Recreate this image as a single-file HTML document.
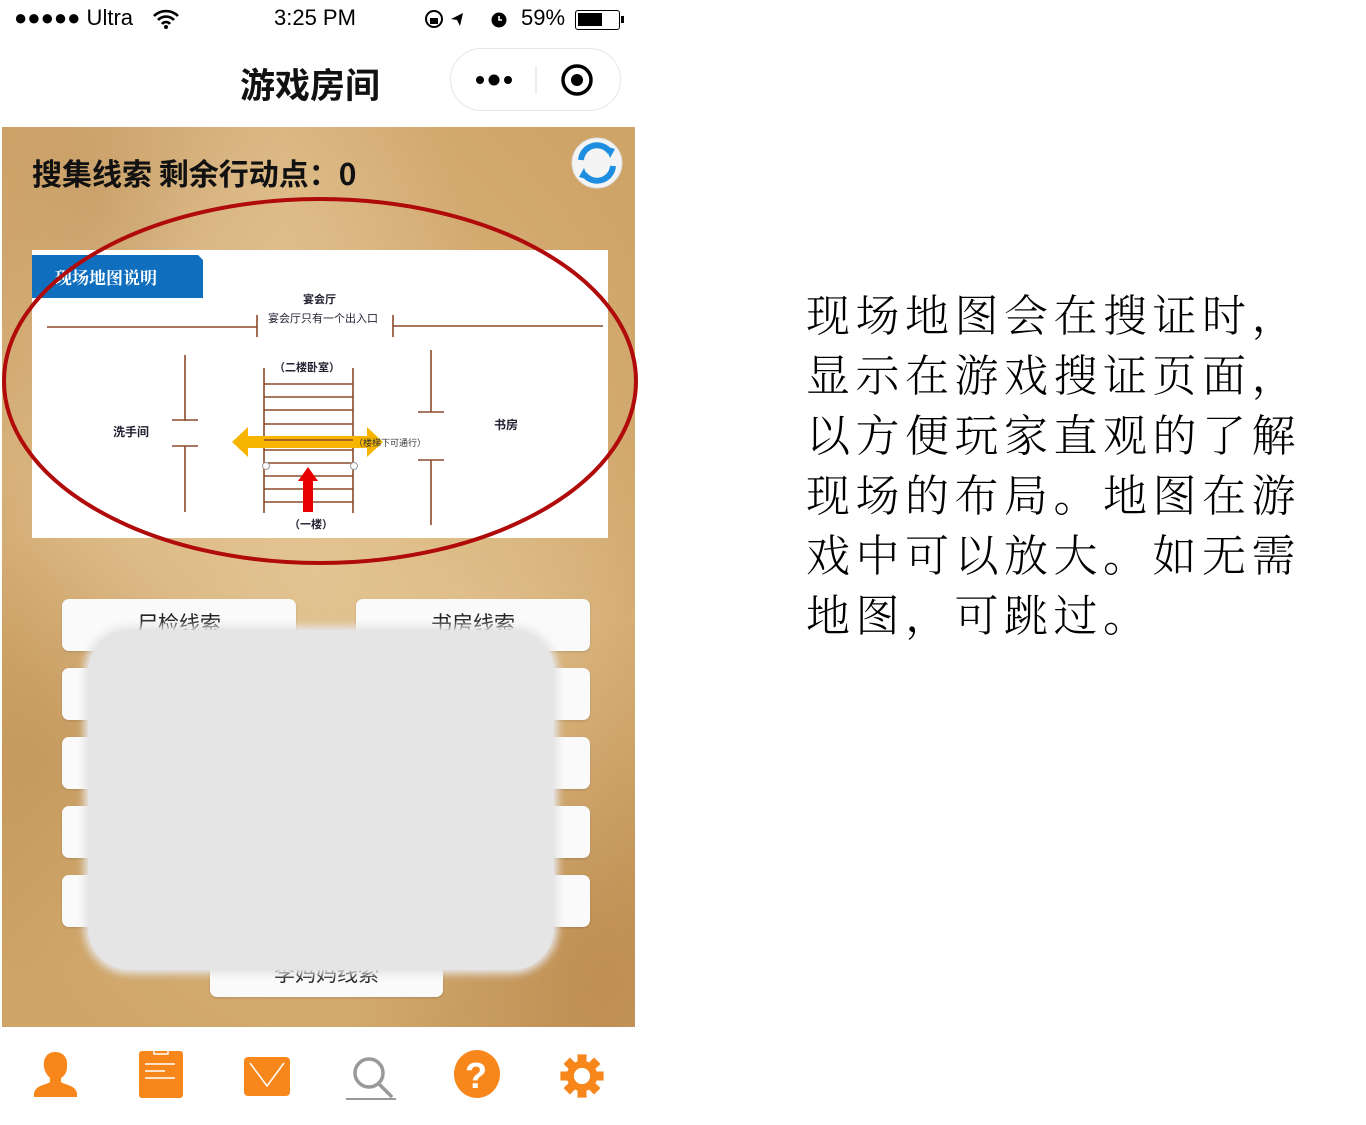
<!DOCTYPE html>
<html><head><meta charset="utf-8"><style>
*{margin:0;padding:0;box-sizing:border-box}
body{width:1366px;height:1125px;background:#fff;position:relative;overflow:hidden;font-family:"Liberation Sans","Noto Sans CJK SC",sans-serif}
.abs{position:absolute}
.parch{left:2px;top:127px;width:633px;height:900px;background:
radial-gradient(ellipse at 15% 8%,rgba(170,120,60,.35),transparent 25%),
radial-gradient(ellipse at 95% 95%,rgba(170,115,55,.45),transparent 30%),
radial-gradient(ellipse at 5% 70%,rgba(175,125,65,.35),transparent 25%),
radial-gradient(ellipse at 30% 20%,rgba(240,215,175,.6),transparent 45%),
radial-gradient(ellipse at 70% 60%,rgba(236,208,160,.5),transparent 40%),
radial-gradient(ellipse at 50% 50%,#dcbb86,#cfa468 90%);}
.btn{position:absolute;background:#fafafa;border-radius:7px;box-shadow:0 1px 2px rgba(0,0,0,.15);font-size:21px;color:#222;text-align:center;line-height:52px}
.txt{position:absolute;left:806px;font-family:"Noto Serif CJK SC","Noto Sans CJK SC",serif;font-weight:300;font-size:44px;letter-spacing:5.5px;color:#000;line-height:60px;white-space:nowrap}
</style></head><body>
<div class="abs" style="left:14px;top:5px;font-size:22px;color:#000">●●●●● Ultra</div>
<svg class="abs" style="left:152px;top:8px" width="28" height="22" viewBox="0 0 28 22"><path d="M2 8a17 17 0 0 1 24 0M6 12a11 11 0 0 1 16 0M10 16a5 5 0 0 1 8 0" stroke="#000" stroke-width="2.6" fill="none"/><circle cx="14" cy="19" r="2" fill="#000"/></svg>
<div class="abs" style="left:274px;top:5px;font-size:22px;color:#000">3:25 PM</div>
<svg class="abs" style="left:422px;top:8px" width="90" height="22"><circle cx="12" cy="11" r="8" stroke="#000" stroke-width="2" fill="none"/><rect x="8" y="10" width="8" height="6" fill="#000"/><path d="M38 18l3-13-12 6 6 1z" fill="#000"/><circle cx="77" cy="12" r="7.5" fill="#000"/><path d="M77 8v4h3" stroke="#fff" stroke-width="1.6" fill="none"/></svg>
<div class="abs" style="left:521px;top:5px;font-size:22px;color:#000">59%</div>
<div class="abs" style="left:575px;top:10px;width:45px;height:20px;border:1.5px solid #000;border-radius:3px;padding:2px"><div style="width:24px;height:13px;background:#000"></div></div>
<div class="abs" style="left:621px;top:16px;width:3px;height:7px;background:#000"></div>
<div class="abs" style="left:240px;top:58px;font-size:35px;color:#111;font-weight:bold;font-family:'Noto Sans CJK SC',sans-serif">游戏房间</div>
<div class="abs" style="left:450px;top:48px;width:171px;height:63px;border:1px solid #e6e6e6;border-radius:32px;background:#fff"></div>
<svg class="abs" style="left:470px;top:62px" width="140" height="36"><circle cx="10" cy="18" r="4" fill="#000"/><circle cx="24" cy="18" r="5.5" fill="#000"/><circle cx="38" cy="18" r="4" fill="#000"/><line x1="66" y1="4" x2="66" y2="32" stroke="#ddd"/><circle cx="107" cy="18" r="14" stroke="#000" stroke-width="3.5" fill="none"/><circle cx="107" cy="18" r="6" fill="#000"/></svg>
<div class="abs parch"></div>
<div class="abs" style="left:32px;top:150px;font-size:30px;font-weight:bold;color:#111;font-family:'Noto Sans CJK SC',sans-serif">搜集线索 剩余行动点：0</div>
<svg class="abs" style="left:570px;top:136px" width="54" height="54" viewBox="0 0 54 54"><circle cx="27" cy="27" r="25" fill="#f4f4f4" stroke="#ddd"/><path d="M11 24a16 16 0 0 1 29-8" stroke="#1e8fe0" stroke-width="6" fill="none"/><path d="M35 10l10 3-5 9z" fill="#1e8fe0"/><path d="M43 30a16 16 0 0 1-29 8" stroke="#1e8fe0" stroke-width="6" fill="none"/><path d="M19 44l-10-3 5-9z" fill="#1e8fe0"/></svg>
<div class="btn" style="left:62px;top:599px;width:234px;height:52px">尸检线索</div>
<div class="btn" style="left:356px;top:599px;width:234px;height:52px">书房线索</div>
<div class="btn" style="left:62px;top:668px;width:234px;height:52px"></div>
<div class="btn" style="left:356px;top:668px;width:234px;height:52px"></div>
<div class="btn" style="left:62px;top:737px;width:234px;height:52px"></div>
<div class="btn" style="left:356px;top:737px;width:234px;height:52px"></div>
<div class="btn" style="left:62px;top:806px;width:234px;height:52px"></div>
<div class="btn" style="left:356px;top:806px;width:234px;height:52px"></div>
<div class="btn" style="left:62px;top:875px;width:234px;height:52px"></div>
<div class="btn" style="left:356px;top:875px;width:234px;height:52px"></div>
<div class="btn" style="left:210px;top:945px;width:233px;height:52px;line-height:60px">李妈妈线索</div>
<div class="abs" style="left:88px;top:630px;width:466px;height:340px;background:#e5e5e5;border-radius:42px;box-shadow:0 0 8px 4px #e5e5e5"></div>
<svg class="abs" style="left:0;top:0" width="640" height="600">
<rect x="32" y="250" width="576" height="288" fill="#fff"/>
<path d="M32 255h166l5 5v38h-171z" fill="#0f6fbe"/>
<text x="55" y="284" font-size="17" fill="#fff" font-weight="bold" font-family="Noto Serif CJK SC,serif">现场地图说明</text>
<text x="303" y="303" font-size="11" font-weight="bold" fill="#223" font-family="Noto Sans CJK SC,sans-serif">宴会厅</text>
<text x="268" y="322" font-size="11" fill="#223" font-family="Noto Sans CJK SC,sans-serif">宴会厅只有一个出入口</text>
<g stroke="#8b4a2a" stroke-width="1.6" fill="none">
<path d="M47 327h210M257 315v22M393 315v22M393 326h210"/>
<path d="M185 355v66M172 420h26M172 446h26M185 446v66"/>
<path d="M431 350v62M418 412h26M418 460h26M431 460v65"/>
<path d="M264 368v145M353 368v145"/>
<path d="M264 384h89M264 397h89M264 410h89M264 424h89M264 437h89M264 450h89M264 463h89M264 476h89M264 489h89M264 502h89"/>
</g>
<path d="M232 442l16-15v9h119v-9l16 15-16 15v-9h-119v9z" fill="#f7b500"/>
<line x1="264" y1="440" x2="353" y2="440" stroke="#8b4a2a" stroke-width="1.5"/>
<path d="M308 467l-10 14h5v31h10v-31h5z" fill="#e60000"/>
<circle cx="266" cy="466" r="3.5" fill="#fff" stroke="#999"/><circle cx="354" cy="466" r="3.5" fill="#fff" stroke="#999"/>
<g font-family="Noto Sans CJK SC,sans-serif" fill="#223" font-weight="bold">
<text x="274" y="371" font-size="11">（二楼卧室）</text>
<text x="289" y="528" font-size="11">（一楼）</text>
<text x="113" y="436" font-size="12">洗手间</text>
<text x="494" y="429" font-size="12">书房</text>
</g>
<text x="354" y="446" font-size="9" fill="#333" font-family="Noto Sans CJK SC,sans-serif">（楼梯下可通行）</text>
<ellipse cx="320" cy="381" rx="316" ry="182" fill="none" stroke="#b00a0a" stroke-width="4"/>
</svg>
<svg class="abs" style="left:0;top:1030px" width="640" height="95">
<path d="M55 22c-9 0-12 8-11 15 1 6 4 9 6 11v4c-4 3-14 3-16 11v4h43v-4c-2-8-12-8-16-11v-4c3-2 6-5 6-11 1-7-2-15-12-15z" fill="#f7861b"/>
<rect x="139" y="21" width="44" height="47" rx="3" fill="#f7861b"/><path d="M154 21v3h14v-3" stroke="#fff" stroke-width="1.5" fill="none"/><path d="M145 34h30M145 41h20M145 48h30" stroke="#fff" stroke-width="1.5"/>
<rect x="244" y="27" width="46" height="39" rx="4" fill="#f7861b"/><path d="M250 33l17 23 17-23" stroke="#fff" stroke-width="1.5" fill="none"/>
<circle cx="369" cy="43" r="14" stroke="#999" stroke-width="3.5" fill="none"/><path d="M379 54l12 12" stroke="#999" stroke-width="3.5" stroke-linecap="round"/><path d="M346 69h50" stroke="#999" stroke-width="2"/>
<ellipse cx="477" cy="44" rx="23" ry="24" fill="#f7861b"/><text x="465" y="58" font-size="36" font-weight="bold" fill="#fff" font-family="Liberation Sans,sans-serif">?</text>
<g transform="translate(582 46) scale(0.9)" fill="#f7861b"><circle r="17"/><g><rect x="-5" y="-24" width="10" height="48"/><rect x="-5" y="-24" width="10" height="48" transform="rotate(45)"/><rect x="-5" y="-24" width="10" height="48" transform="rotate(90)"/><rect x="-5" y="-24" width="10" height="48" transform="rotate(135)"/></g><circle r="9" fill="#fff"/></g>
</svg>
<div class="txt" style="top:282px">现场地图会在搜证时，</div>
<div class="txt" style="top:342px">显示在游戏搜证页面，</div>
<div class="txt" style="top:402px">以方便玩家直观的了解</div>
<div class="txt" style="top:462px">现场的布局。地图在游</div>
<div class="txt" style="top:522px">戏中可以放大。如无需</div>
<div class="txt" style="top:582px">地图，可跳过。</div>
</body></html>
